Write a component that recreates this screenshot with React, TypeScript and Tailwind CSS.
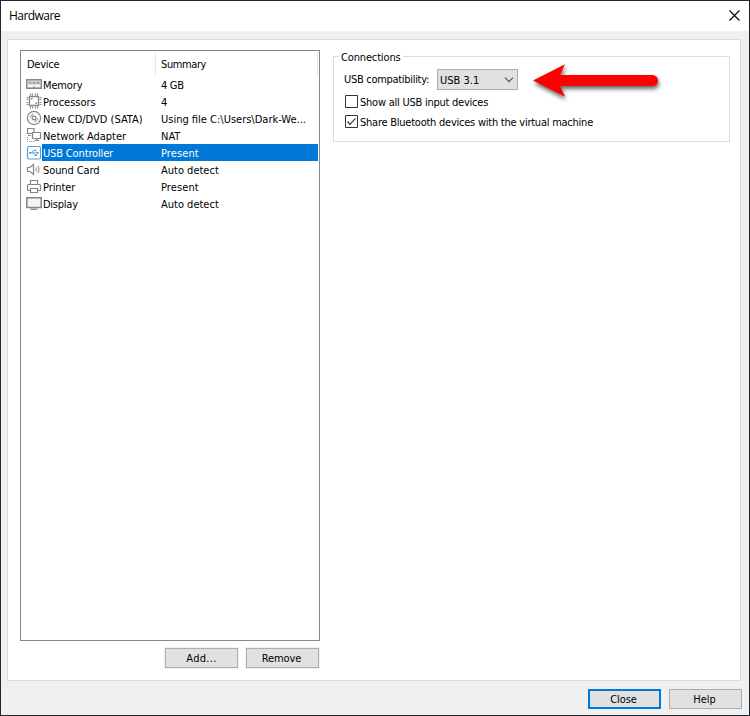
import { type ReactNode } from 'react';

type Device = {
  name: string;
  summary: string;
  icon: ReactNode;
  nameClass?: string;
  summaryClass?: string;
};

type IconProps = { children: ReactNode };

const Icon: React.FC<IconProps> = ({ children }) => (
  <svg
    className="block h-[17px] w-4 shrink-0"
    viewBox="0 0 16 17"
    fill="none"
    stroke="#868686"
    strokeWidth="1.200"
  >
    {children}
  </svg>
);

const devices: Device[] = [
  {
    name: 'Memory',
    summary: '4 GB',
    nameClass: 'tracking-[-0.15px]',
    summaryClass: 'tracking-[-0.3px]',
    icon: (
      <Icon>
        <path d="M.7 3.700h14.600v8.600H.7z" fill="#e6e6e6" strokeWidth="1.400" />
        <path d="M2.500 5.500h3v2.500h-3zM6.500 5.500h3v2.500h-3zM10.500 5.500h3v2.500h-3z" fill="#a0a0a0" stroke="none" />
        <path d="M2 10h5M9 10h5" stroke="#fff" strokeWidth="1" />
        <path d="M7 11h2v2H7z" fill="#868686" stroke="none" />
      </Icon>
    ),
  },
  {
    name: 'Processors',
    summary: '4',
    icon: (
      <Icon>
        <path d="M3.500 3.500h9v9h-9z" strokeWidth="1.300" />
        <path
          d="M4.500.5v2M6.500.5v2M9.500.5v2M11.500.5v2M4.500 13.500v2M6.500 13.500v2M9.500 13.500v2M11.500 13.500v2M.5 4.500h2M.5 6.500h2M.5 9.500h2M.5 11.500h2M13.500 4.500h2M13.500 6.500h2M13.500 9.500h2M13.500 11.500h2"
          strokeWidth="1.100"
        />
        <path d="M5 5h1.500v1.500H5zM9.500 9.500H11V11H9.500z" fill="#868686" stroke="none" />
      </Icon>
    ),
  },
  {
    name: 'New CD/DVD (SATA)',
    summary: 'Using file C:\\Users\\Dark-We...',
    icon: (
      <Icon>
        <circle cx="8" cy="8" r="6.600" />
        <circle cx="8" cy="8" r="1.900" />
        <path d="M4.200 7.500A4 4 0 0 1 7.500 4.200M8.500 11.800A4 4 0 0 0 11.800 8.500" strokeWidth="1" />
      </Icon>
    ),
  },
  {
    name: 'Network Adapter',
    summary: 'NAT',
    nameClass: 'tracking-[-0.05px]',
    icon: (
      <Icon>
        <path d="M1.500 1.500h6.500v5H1.500zM2 8.500h3" />
        <path d="M6.500 5.500h8v6h-8z" fill="#fff" />
        <path d="M8.500 13.500h4.500M10.700 11.500v2" />
        <path d="M1.500 10v4.500H8" strokeDasharray="1 1" strokeWidth="1" />
      </Icon>
    ),
  },
  {
    name: 'USB Controller',
    summary: 'Present',
    nameClass: 'tracking-[-0.15px]',
    summaryClass: 'tracking-[0.1px]',
    icon: (
      <Icon>
        <rect x="1.500" y="2.500" width="13" height="12.500" rx="1.500" fill="#fff" stroke="#5a9fd8" />
        <path d="M4 8.800h8M5.500 8.800l1.800-2.300h1.700M6.800 8.800l1.700 2.300h1.500" stroke="#4b96d6" strokeWidth=".8" />
        <path d="M3.200 7.900H5v1.800H3.200zM8.500 5.700h1.700v1.600H8.500zM9.300 10.300H11v1.600H9.300zM11 7.400l2 1.400-2 1.400z" fill="#4b96d6" stroke="none" />
      </Icon>
    ),
  },
  {
    name: 'Sound Card',
    summary: 'Auto detect',
    nameClass: 'tracking-[-0.1px]',
    icon: (
      <Icon>
        <path d="M1.500 6.500H4L7.500 3.500v10L4 10.500H1.500z" />
        <path d="M9.700 6.500q1.200 2 0 4M11.700 4.700q2.400 3.800 0 7.600" stroke="#a0a0a0" />
      </Icon>
    ),
  },
  {
    name: 'Printer',
    summary: 'Present',
    nameClass: 'tracking-[-0.1px]',
    summaryClass: 'tracking-[0.1px]',
    icon: (
      <Icon>
        <path d="M4.500 6.500v-4h7v4M4 12.500H2.500q-1 0-1-1v-4q0-1 1-1h11q1 0 1 1v4q0 1-1 1H12" />
        <path d="M4.500 10.500h7v4h-7z" fill="#fff" />
      </Icon>
    ),
  },
  {
    name: 'Display',
    summary: 'Auto detect',
    nameClass: 'tracking-[-0.25px]',
    icon: (
      <Icon>
        <path d="M.8 2.800h14.400v9.800H.8z" fill="#f4f4f4" strokeWidth="1.500" />
        <path d="M4.500 14.300h7" strokeWidth="1.300" />
      </Icon>
    ),
  },
];

type ButtonProps = { label: string; className?: string; labelClass?: string };

const Button: React.FC<ButtonProps> = ({
  label,
  className = 'border border-[#adadad]',
  labelClass = '',
}) => (
  <button
    className={`${className} flex h-5 w-[73px] items-center justify-center bg-[#e1e1e1] text-[11px] leading-none shadow-[0_0_0_1px_#f0f0f0]`}
  >
    <span className={labelClass}>{label}</span>
  </button>
);

type CheckboxProps = { label: string; checked?: boolean };

const Checkbox: React.FC<CheckboxProps> = ({ label, checked = false }) => (
  <label className="flex h-5 items-center gap-[2px]">
    <svg className="mb-[2px] block size-[13px]" viewBox="0 0 13 13" fill="none" stroke="#333">
      <path d="M.5.5h12v12H.5z" fill="#fff" />
      {checked && <path d="M2.500 6.500L5 9.300l5.500-6" strokeWidth="1.200" />}
    </svg>
    <span className="whitespace-nowrap tracking-[-0.24px]">{label}</span>
  </label>
);

const DeviceList: React.FC = () => (
  <div className="h-[591px] w-[300px] border border-[#828790] px-px pt-px">
    <div className="flex h-6 items-center">
      <div className="flex h-6 w-[134px] items-center border-r border-[#e5e5e5] pl-[5px] tracking-[-0.25px]">
        Device
      </div>
      <div className="flex h-6 flex-1 items-center border-r border-[#e5e5e5] pl-[5px] tracking-[-0.4px]">
        Summary
      </div>
    </div>
    {devices.map((device) => {
      const selected = device.name === 'USB Controller';

      return (
        <div key={device.name} className="flex h-[17px] pl-1">
          {device.icon}
          <div
            className={`flex flex-1 items-center whitespace-nowrap pt-[2px] ${selected ? 'bg-[#0078d7] text-white' : ''}`}
          >
            <span className={`w-[119px] pl-px ${device.nameClass ?? ''}`}>
              {device.name}
            </span>
            <span className={device.summaryClass}>{device.summary}</span>
          </div>
        </div>
      );
    })}
  </div>
);

const Arrow: React.FC = () => (
  <svg
    className="absolute left-[190px] top-px h-[56px] w-[150px]"
    viewBox="523 56 150 56"
  >
    <path
      d="M533 80.500L565 64.200L560 75H652.500a5.500 5.500 0 0 1 0 11H560L565 96.700z"
      fill="#fe0000"
      style={{ filter: 'drop-shadow(1px 3px 2px rgba(0,0,0,.6))' }}
    />
  </svg>
);

const Connections: React.FC = () => (
  <fieldset className="relative mt-[5px] h-[87px] w-[397px]">
    <div className="absolute inset-x-0 bottom-0 top-[1px] border border-[#dcdcdc]" />
    <div className="relative ml-[6px] flex h-[5px] w-[64px] items-center bg-white pl-[2px] tracking-[-0.15px]">
      Connections
    </div>
    <div className="relative mt-[9px] flex h-[21px] items-center pl-[11px]">
      <span className="w-[93px] whitespace-nowrap tracking-[-0.3px]">
        USB compatibility:
      </span>
      <div className="flex h-[21px] w-[81px] items-center justify-between border border-[#adadad] bg-[#e1e1e1] pl-[2px] pr-[3px]">
        <span className="pt-px">USB 3.1</span>
        <svg className="h-[6px] w-[10px]" viewBox="0 0 10 6" fill="none" stroke="#555">
          <path d="M1 .7L5 4.700L9 .7" strokeWidth="1.200" />
        </svg>
      </div>
    </div>
    <div className="relative mt-[2px] pl-3">
      <Checkbox label="Show all USB input devices" />
      <Checkbox label="Share Bluetooth devices with the virtual machine" checked />
    </div>
    <Arrow />
  </fieldset>
);

export default function App() {
  return (
    <div className="flex h-[716px] w-[750px] flex-col border border-[#20282f] bg-[#f0f0f0] font-['DejaVu_Sans_Condensed','DejaVu_Sans',sans-serif] text-[11px] leading-none text-black">
      <header className="flex h-[30px] shrink-0 items-center justify-between bg-white pl-2 pr-[9px]">
        <h1 className="font-['Open_Sans',sans-serif] text-[12px] tracking-[-0.55px]">
          Hardware
        </h1>
        <svg className="mb-[2px] size-[11px]" viewBox="0 0 11 11" fill="none" stroke="#000">
          <path d="M.5.5l10 10M10.500.5l-10 10" strokeWidth="1.100" />
        </svg>
      </header>

      <main className="ml-[6px] mt-2 flex h-[642px] w-[734px] border border-[#dcdcdc] bg-white">
        <div className="ml-3 mt-[10px] w-[300px]">
          <DeviceList />
          <div className="mt-[7px] flex justify-end gap-2 pr-px">
            <Button label="Add..." labelClass="tracking-[0.3px]" />
            <Button label="Remove" labelClass="pr-[2px] tracking-[-0.1px]" />
          </div>
        </div>
        <div className="ml-[13px] mt-[10px]">
          <Connections />
        </div>
      </main>

      <footer className="mt-2 flex justify-end gap-2 pr-[7px]">
        <Button
          label="Close"
          className="border-2 border-[#0078d7] pr-[2px]"
          labelClass="tracking-[-0.1px]"
        />
        <Button label="Help" labelClass="pr-[2px]" />
      </footer>
    </div>
  );
}
